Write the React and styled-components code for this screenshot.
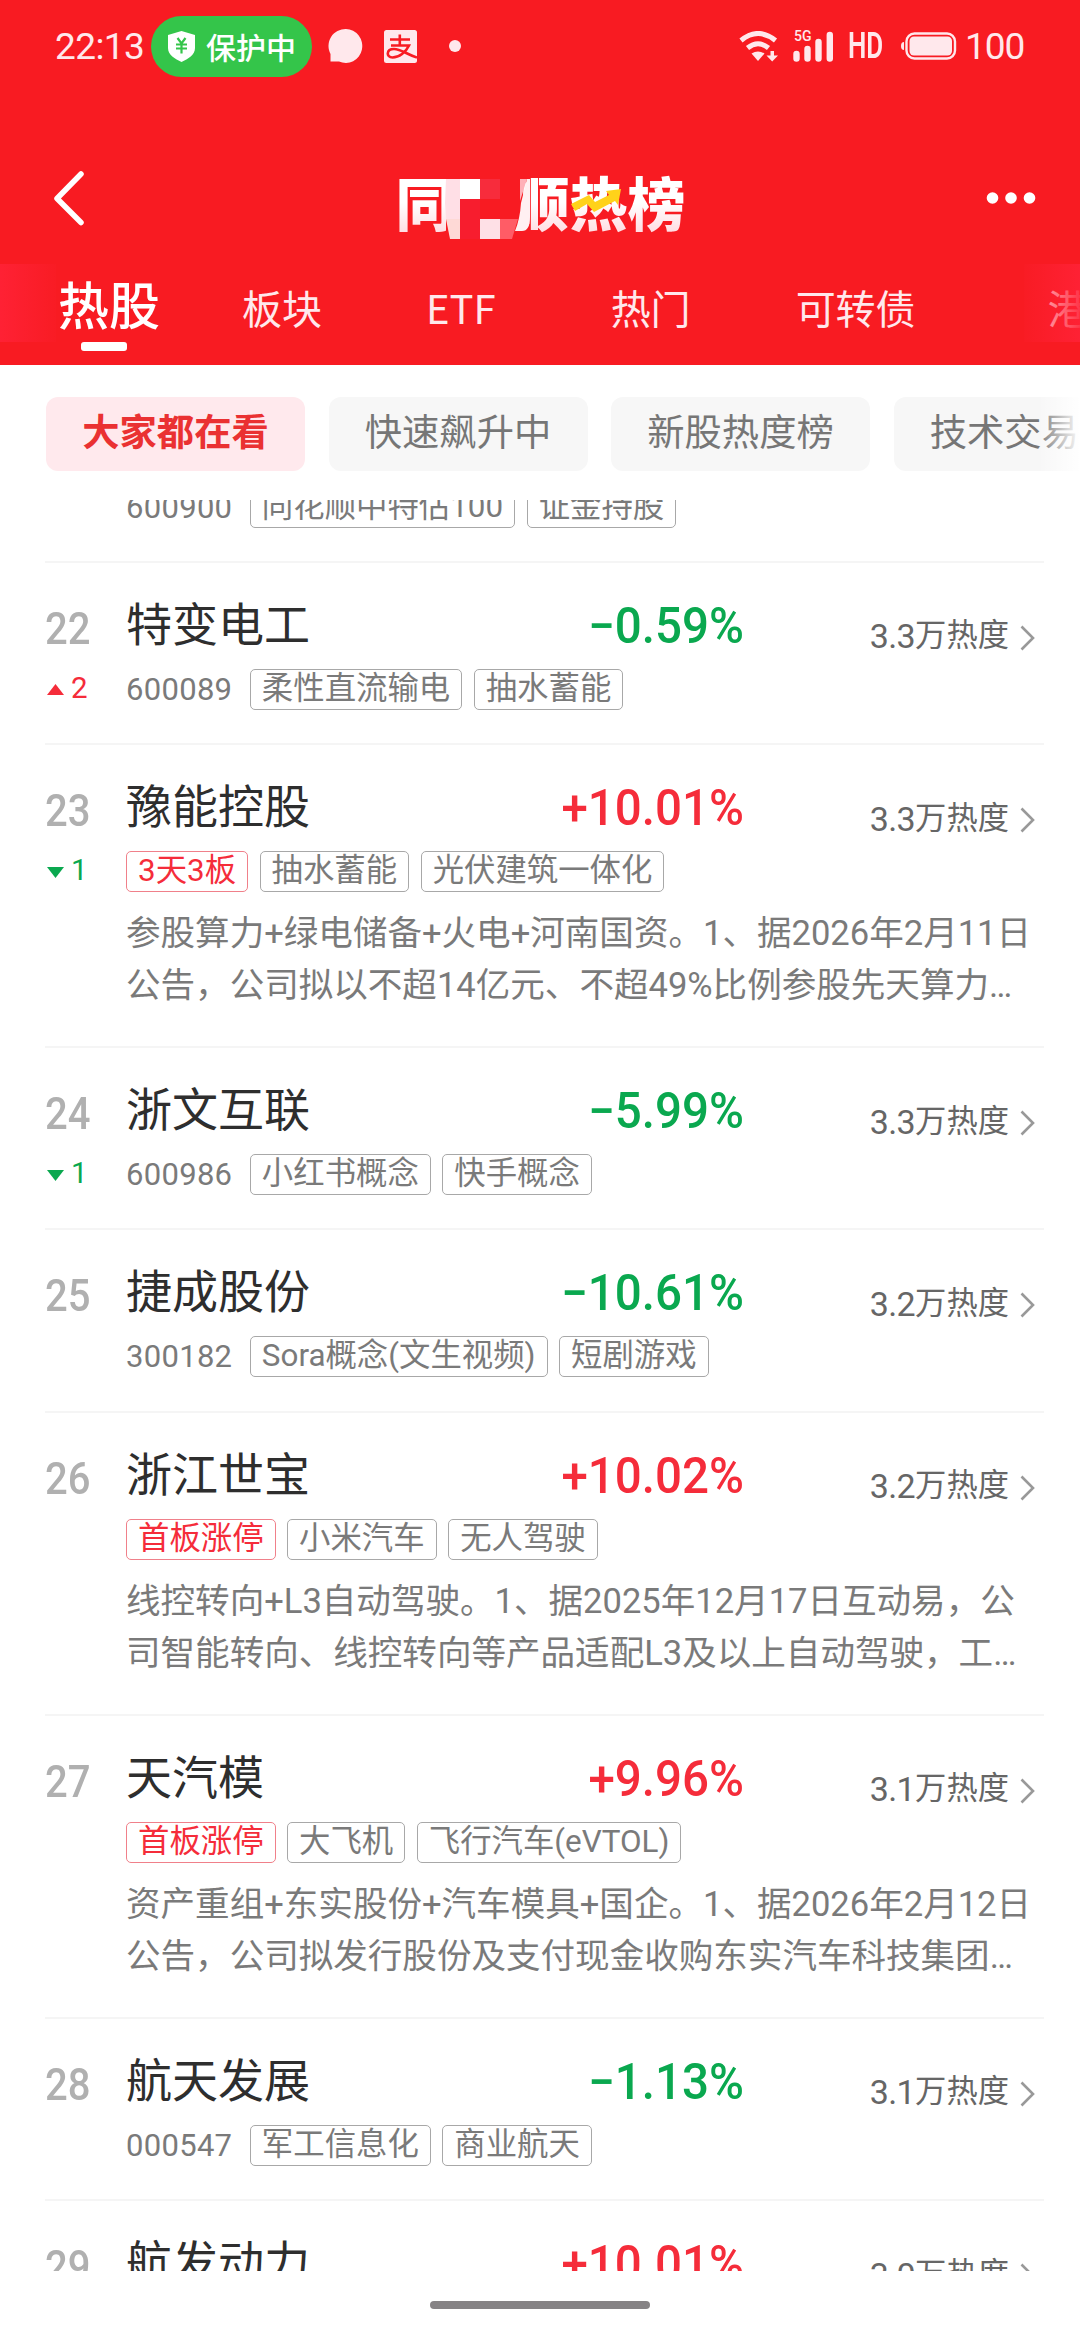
import styled, { createGlobalStyle } from "styled-components";

const colors = {
    header: "#f81b22",
    red: "#f52c3a",
    green: "#0aa84f",
    status: "#ffe8ec",
    grey: "#7a7a7a",
};

const tabs = [
    { label: "板块", gap: 82 },
    { label: "ETF", gap: 104 },
    { label: "热门", gap: 115 },
    { label: "可转债", gap: 105 },
    { label: "港股", gap: 132 },
];

const filters = ["大家都在看", "快速飙升中", "新股热度榜", "技术交易榜"];

const stocks = [
    { rank: "", code: "600900", tags: ["同花顺中特估100", "证金持股"] },
    { rank: 22, name: "特变电工", change: "−0.59%", heat: "3.3", trend: 2, code: "600089", tags: ["柔性直流输电", "抽水蓄能"] },
    {
        rank: 23, name: "豫能控股", change: "+10.01%", heat: "3.3", trend: -1, hot: "3天3板", tags: ["抽水蓄能", "光伏建筑一体化"],
        text: ["参股算力+绿电储备+火电+河南国资。1、据2026年2月11日", "公告，公司拟以不超14亿元、不超49%比例参股先天算力…"],
    },
    { rank: 24, name: "浙文互联", change: "−5.99%", heat: "3.3", trend: -1, code: "600986", tags: ["小红书概念", "快手概念"] },
    { rank: 25, name: "捷成股份", change: "−10.61%", heat: "3.2", code: "300182", tags: ["Sora概念(文生视频)", "短剧游戏"] },
    {
        rank: 26, name: "浙江世宝", change: "+10.02%", heat: "3.2", hot: "首板涨停", tags: ["小米汽车", "无人驾驶"],
        text: ["线控转向+L3自动驾驶。1、据2025年12月17日互动易，公", "司智能转向、线控转向等产品适配L3及以上自动驾驶，工…"],
    },
    {
        rank: 27, name: "天汽模", change: "+9.96%", heat: "3.1", hot: "首板涨停", tags: ["大飞机", "飞行汽车(eVTOL)"],
        text: ["资产重组+东实股份+汽车模具+国企。1、据2026年2月12日", "公告，公司拟发行股份及支付现金收购东实汽车科技集团…"],
    },
    { rank: 28, name: "航天发展", change: "−1.13%", heat: "3.1", code: "000547", tags: ["军工信息化", "商业航天"] },
    { rank: 29, name: "航发动力", change: "+10.01%", heat: "3.0", tags: [] },
];

function StatusBar() {
    return (
        <Status>
            <Clock>22:13</Clock>
            <Guard>
                <svg width="29" height="31" viewBox="0 0 29 31">
                    <path d="M14.5 0L28 4V17C28 24 21 28 14.5 31C8 28 1 24 1 17V4Z" fill="#fff" />
                    <path d="M10.5 7L14.5 12.5L18.5 7M9 13.5H20M9 17.5H20M14.5 12.5V22.5" stroke="#34c54a" strokeWidth="2.2" fill="none" />
                </svg>
                保护中
            </Guard>
            <Notices>
                <svg width="35" height="36" viewBox="0 0 35 36">
                    <path d="M18 1A16.5 17 0 1 1 11 33.500H2.500V26A17 17 0 0 1 18 1Z" fill={colors.status} />
                </svg>
                <svg width="33" height="33" viewBox="0 0 33 33">
                    <rect width="33" height="33" rx="2.500" fill={colors.status} />
                    <path d="M6 9.500H26M15.800 4.500V15.500M7 15.500H25C22 22 15 27.500 8.500 27.500C2 27.500 2 19 10 19C17 19 22 24 33 27.500" stroke={colors.header} strokeWidth="2.600" fill="none" />
                </svg>
                <svg width="12" height="12" viewBox="0 0 12 12">
                    <circle cx="6" cy="6" r="6" fill={colors.status} />
                </svg>
            </Notices>
            <System>
                <svg width="40" height="31" viewBox="0 0 40 31">
                    <path d="M2 9.500Q19 -4.500 36.500 9.500M8.500 17Q19 8.500 29.500 17" stroke={colors.status} strokeWidth="5" fill="none" />
                    <path d="M12.500 22.500Q19 18.500 25.500 22.500L19 30Z" fill={colors.status} />
                    <path d="M31.500 20H35V24.500H39L33.200 30.500L27.500 24.500H31.500Z" fill={colors.status} />
                </svg>
                <Signal>
                    <Network>5G</Network>
                    <svg width="41" height="31" viewBox="0 0 41 31">
                        <path d="M3.500 23V27.500M14.500 18V27.500M25.500 11V27.500M36.800 4V27.500" stroke={colors.status} strokeWidth="6.400" strokeLinecap="round" />
                    </svg>
                </Signal>
                <Hd>HD</Hd>
                <svg width="56" height="28" viewBox="0 0 56 28">
                    <rect x="5.500" y="1.500" width="48.500" height="25" rx="8" stroke={colors.status} strokeWidth="2.400" fill="none" />
                    <rect x="8.500" y="4.500" width="42.500" height="19" rx="4.500" fill={colors.status} />
                    <path d="M3 10Q0 10 0 14Q0 18 3 18Z" fill={colors.status} />
                </svg>
                <Level>100</Level>
            </System>
        </Status>
    );
}

function Logo() {
    return (
        <LogoBox>
            <LogoText>同</LogoText>
            <LogoText>顺热榜</LogoText>
            <LogoArt width="290" height="66" viewBox="0 0 290 66">
                <rect x="50" y="2" width="76" height="62" fill={colors.header} />
                <path d="M50 6H64V46H50L49 30Z" fill="#ffdfe6" />
                <path d="M50 46H64V66H54Z" fill="#fed9d6" />
                <rect x="64" y="6" width="20" height="20" fill="#fff" />
                <rect x="84" y="6" width="20" height="20" fill="#f72c3c" />
                <rect x="64" y="26" width="20" height="40" fill="#f71d2e" />
                <rect x="84" y="46" width="20" height="20" fill="#fee0e6" />
                <path d="M104 46H122L116 66H104Z" fill="#ff5c66" />
                <path d="M124 6H131L124 28Z" fill="#ffb0b8" />
                <path d="M131 6H134V44Q134 58 126 58H119Q124 46 125 30Z" fill="#fff0f2" />
                <path d="M175 31L193 22L199 29L213 22L210 18L225 16L222 32L219 28L198 39L191 31L179 38Z" fill="#ffd21a" />
            </LogoArt>
        </LogoBox>
    );
}

function Stock({ stock }) {
    const { rank, name, change, heat, trend, code, hot, tags, text } = stock;
    return (
        <Row $tall={Boolean(text)}>
            <RankColumn>
                <Rank>{rank}</Rank>
                {trend && (
                    <Trend $up={trend > 0}>
                        <svg width="17" height="11" viewBox="0 0 17 11">
                            <path d={trend > 0 ? "M8.500 0L17 11H0Z" : "M8.500 11L0 0H17Z"} fill="currentColor" />
                        </svg>
                        {Math.abs(trend)}
                    </Trend>
                )}
            </RankColumn>
            <Main>
                <TopLine>
                    <Name>{name}</Name>
                    {change && <Change $up={change[0] === "+"}>{change}</Change>}
                    {heat && (
                        <Heat>
                            <HeatNumber>{heat}</HeatNumber>万热度
                            <svg width="15" height="26" viewBox="0 0 15 26">
                                <path d="M1.500 1.500L13 13L1.500 24.500" stroke="#999" strokeWidth="2.600" fill="none" />
                            </svg>
                        </Heat>
                    )}
                </TopLine>
                <TagLine>
                    {code && <Code>{code}</Code>}
                    {hot && <Tag $hot>{hot}</Tag>}
                    {tags.map((tag) => <Tag key={tag}>{tag}</Tag>)}
                </TagLine>
                {text && (
                    <Reason>
                        {text.map((line) => <p key={line}>{line}</p>)}
                    </Reason>
                )}
            </Main>
        </Row>
    );
}

function App() {
    return (
        <>
            <GlobalStyle />
            <Page>
                <Header>
                    <StatusBar />
                    <TitleBar>
                        <svg width="32" height="56" viewBox="0 0 32 56">
                            <path d="M28 4L4 28.500L28 52.500" stroke="#fff" strokeWidth="5.500" strokeLinecap="round" strokeLinejoin="round" fill="none" />
                        </svg>
                        <Logo />
                        <svg width="50" height="12" viewBox="0 0 50 12">
                            <circle cx="6.500" cy="6" r="5.800" fill="#fff" />
                            <circle cx="25" cy="6" r="5.800" fill="#fff" />
                            <circle cx="43.500" cy="6" r="5.800" fill="#fff" />
                        </svg>
                    </TitleBar>
                    <Tabs>
                        <ActiveTab>热股</ActiveTab>
                        {tabs.map((tab) => <Tab key={tab.label} $gap={tab.gap}>{tab.label}</Tab>)}
                        <TabFade />
                        <TabFade $right />
                    </Tabs>
                </Header>
                <Filters>
                    {filters.map((filter, i) => <Filter key={filter} $active={i === 0}>{filter}</Filter>)}
                    <FilterFade />
                </Filters>
                <List>
                    {stocks.map((stock) => <Stock key={stock.rank} stock={stock} />)}
                </List>
                <Footer>
                    <HomeBar />
                </Footer>
            </Page>
        </>
    );
}

const GlobalStyle = createGlobalStyle`
    * {
        box-sizing: border-box;
    }

    body {
        margin: 0;
        background: #fff;
        font-family: Roboto, "Noto Sans CJK SC", sans-serif;
    }

    svg {
        display: block;
        flex-shrink: 0;
    }

    p {
        margin: 0;
    }
`;

const Page = styled.div`
    display: flex;
    flex-direction: column;
    width: 1080px;
    height: 2340px;
    overflow: hidden;
    background: #fff;
`;

const Header = styled.header`
    height: 365px;
    background: ${colors.header};
`;

const Status = styled.div`
    display: flex;
    align-items: center;
    height: 92px;
    padding: 0 55px 0 55px;
    color: ${colors.status};
`;

const Clock = styled.span`
    width: 96px;
    font-size: 37px;
    letter-spacing: -0.6px;
`;

const Guard = styled.div`
    display: flex;
    align-items: center;
    gap: 10px;
    width: 161px;
    height: 61px;
    padding-left: 16px;
    border-radius: 31px;
    background: #34c54a;
    color: #fff;
    font-size: 30px;
    font-weight: 500;
    white-space: nowrap;
`;

const Notices = styled.div`
    display: flex;
    align-items: center;
    margin-left: 16px;

    svg + svg {
        margin-left: 21px;
    }

    svg:last-child {
        margin-left: 32px;
    }
`;

const System = styled.div`
    display: flex;
    align-items: center;
    margin-left: auto;
`;

const Signal = styled.div`
    position: relative;
    margin: 0 14px 0 14px;
`;

const Network = styled.span`
    position: absolute;
    top: -3px;
    left: 1px;
    font-size: 14px;
    font-weight: 500;
    line-height: 17px;
`;

const Hd = styled.span`
    width: 53px;
    font-size: 36px;
    font-weight: 600;
    transform: scaleX(0.72);
    transform-origin: left;
`;

const Level = styled.span`
    width: 60px;
    margin-left: 8px;
    font-size: 37px;
    letter-spacing: -1px;
`;

const TitleBar = styled.div`
    display: flex;
    align-items: center;
    justify-content: space-between;
    height: 172px;
    padding: 40px 44px 0 53px;
`;

const LogoBox = styled.div`
    position: relative;
    display: flex;
    justify-content: space-between;
    width: 290px;
    height: 66px;
    margin: 16px 0 0 10px;
`;

const LogoText = styled.span`
    font-family: "Noto Sans CJK SC", sans-serif;
    font-size: 58px;
    font-weight: 900;
    line-height: 56px;
    background: linear-gradient(#fff 45%, #ffd9df 95%);
    background-clip: text;
    color: transparent;
`;

const LogoArt = styled.svg`
    position: absolute;
    top: 0;
    left: 0;
`;

const Tabs = styled.nav`
    position: relative;
    display: flex;
    align-items: center;
    height: 78px;
    padding-left: 58px;
    font-family: "Noto Sans CJK SC", sans-serif;
    white-space: nowrap;
`;

const ActiveTab = styled.span`
    position: relative;
    color: #fff;
    font-size: 51px;
    font-weight: 500;
    line-height: 78px;

    &::after {
        content: "";
        position: absolute;
        left: 23px;
        bottom: -9px;
        width: 46px;
        height: 9px;
        border-radius: 3px;
        background: #fff;
    }
`;

const Tab = styled.span`
    margin-left: ${(props) => props.$gap}px;
    padding-top: 7px;
    color: ${colors.status};
    font-size: 40px;
`;

const TabFade = styled.div`
    position: absolute;
    top: 0;
    ${(props) => (props.$right ? "right: 0;" : "left: 0;")}
    width: 56px;
    height: 78px;
    background: linear-gradient(${(props) => (props.$right ? "to right" : "to left")}, rgba(255, 34, 54, 0.1), rgba(255, 34, 54, 0.9));
`;

const Filters = styled.div`
    position: relative;
    display: flex;
    flex-shrink: 0;
    gap: 23.5px;
    height: 135px;
    padding: 32px 0 0 46px;
    overflow: hidden;
`;

const Filter = styled.div`
    flex-shrink: 0;
    width: 259px;
    height: 74px;
    border-radius: 12px;
    background: ${(props) => (props.$active ? "#ffe9ed" : "#f7f7f7")};
    color: ${(props) => (props.$active ? "#ea3132" : "#767676")};
    font-size: 37.3px;
    font-weight: ${(props) => (props.$active ? 700 : 400)};
    line-height: 73px;
    text-align: center;
`;

const FilterFade = styled.div`
    position: absolute;
    top: 32px;
    right: 0;
    width: 39px;
    height: 74px;
    background: linear-gradient(to right, rgba(255, 252, 255, 0.1), rgba(255, 255, 255, 0.85) 85%, #fff);
`;

/* the list is scrolled, so its first row starts above the visible part */
const List = styled.main`
    flex-shrink: 0;
    height: 1771px;
    padding: 0 36px 0 45px;
    overflow: hidden;

    > :first-child {
        margin-top: -119.5px;
    }
`;

const Row = styled.article`
    display: flex;
    height: ${(props) => (props.$tall ? 303.1 : 182.3)}px;
    padding-top: 32px;
    border-bottom: 2px solid #f5f5f5;
`;

const RankColumn = styled.div`
    flex-shrink: 0;
    width: 81px;
`;

const Rank = styled.div`
    height: 68px;
    color: #b0b0b0;
    font-size: 43.5px;
    font-weight: 500;
    line-height: 69px;
    transform: scaleX(0.92);
    transform-origin: left;
`;

const Trend = styled.div`
    display: flex;
    align-items: center;
    gap: 7px;
    height: 50px;
    padding-left: 2px;
    color: ${(props) => (props.$up ? colors.red : colors.green)};
    font-size: 29.5px;

    svg {
        margin-top: 4px;
    }
`;

const Main = styled.div`
    flex: 1;
    min-width: 0;
`;

const TopLine = styled.div`
    display: grid;
    grid-template-columns: 300px 318px 1fr;
    height: 74px;
    line-height: 60px;
`;

const Name = styled.h2`
    margin: 0;
    color: #2e2e2e;
    font-size: 46px;
    font-weight: 400;
`;

const Change = styled.span`
    color: ${(props) => (props.$up ? colors.red : colors.green)};
    font-size: 49.5px;
    font-weight: 500;
    line-height: 62px;
    text-align: right;
    transform: scaleX(0.96);
    transform-origin: right;
`;

const Heat = styled.div`
    display: flex;
    align-items: center;
    justify-content: flex-end;
    height: 62px;
    padding: 21px 9px 0 0;
    color: #666;
    font-size: 31.3px;

    svg {
        margin: 3px 0 0 11px;
    }
`;

const HeatNumber = styled.span`
    font-size: 34px;
    letter-spacing: -0.6px;
`;

const TagLine = styled.div`
    display: flex;
    align-items: center;
    gap: 11.5px;
    height: 41px;
`;

const Code = styled.span`
    margin-right: 6px;
    color: ${colors.grey};
    font-size: 31px;
    letter-spacing: 0.3px;
`;

const Tag = styled.span`
    height: 41px;
    padding: 0 11px;
    border: 1px solid ${(props) => (props.$hot ? "#f0808a" : "#a8a8a8")};
    border-radius: 5px;
    color: ${(props) => (props.$hot ? colors.red : colors.grey)};
    font-size: 31.4px;
    line-height: 38px;
    white-space: nowrap;
`;

const Reason = styled.div`
    margin-top: 15px;
    color: ${colors.grey};
    font-size: 34.55px;
    line-height: 52px;
    white-space: nowrap;
`;

const Footer = styled.footer`
    display: flex;
    justify-content: center;
    padding-top: 30px;
`;

const HomeBar = styled.div`
    width: 220px;
    height: 8px;
    border-radius: 4px;
    background: #868385;
`;

export default App;
